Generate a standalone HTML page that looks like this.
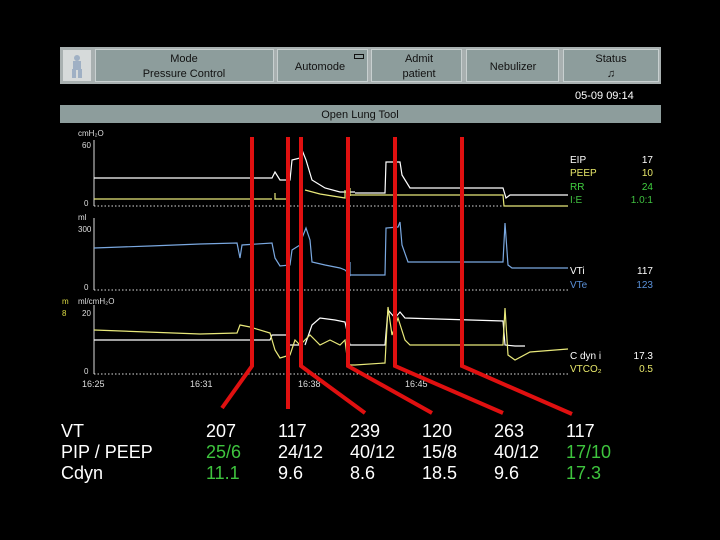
<!DOCTYPE html>
<html><head><meta charset="utf-8"><style>
html,body{margin:0;padding:0;background:#000;width:720px;height:540px;overflow:hidden}
svg{position:absolute;left:0;top:0}
.t{font-family:"Liberation Sans",sans-serif}
</style></head><body>
<svg width="720" height="540" viewBox="0 0 720 540" xmlns="http://www.w3.org/2000/svg">
<!-- top bar -->
<rect x="60" y="47" width="601" height="37" fill="#a8b0b0"/>
<rect x="63" y="50" width="28" height="31" fill="#d6dada"/>
<g fill="#9fb0c4"><circle cx="77" cy="58" r="3"/><rect x="73" y="61" width="8" height="9"/><rect x="72" y="69" width="4" height="9"/><rect x="78" y="69" width="4" height="9"/></g>
<g fill="#8d9d9c" stroke="#c8d0d0" stroke-width="1">
<rect x="95.5" y="49.5" width="178" height="32"/>
<rect x="277.5" y="49.5" width="90" height="32"/>
<rect x="371.5" y="49.5" width="90" height="32"/>
<rect x="466.5" y="49.5" width="92" height="32"/>
<rect x="563.5" y="49.5" width="95" height="32"/>
</g>
<g class="t" font-size="11" fill="#111" text-anchor="middle">
<text x="184" y="62">Mode</text><text x="184" y="77">Pressure Control</text>
<text x="320" y="70">Automode</text>
<text x="419" y="62">Admit</text><text x="419" y="77">patient</text>
<text x="513" y="70">Nebulizer</text>
<text x="611" y="62">Status</text><text x="611" y="77">♫</text>
</g>
<rect x="354.5" y="54.5" width="9" height="4" fill="none" stroke="#111"/>
<text class="t" x="575" y="99" font-size="11" fill="#fff">05-09  09:14</text>
<rect x="60" y="105" width="601" height="18" fill="#8d9d9c"/>
<text class="t" x="360" y="118" font-size="11" fill="#111" text-anchor="middle">Open Lung Tool</text>

<!-- axes -->
<g stroke="#ddd" stroke-width="1" fill="none">
<path d="M94 140V206M94 218V290M94 305V374"/>
<path d="M94 206H570M94 290H570M94 374H570" stroke-dasharray="1.5 2"/>
</g>
<g class="t" font-size="8" fill="#ddd">
<text x="78" y="136">cmH₂O</text><text x="82" y="148">60</text><text x="84" y="206">0</text>
<text x="78" y="220">ml</text><text x="78" y="232">300</text><text x="84" y="290">0</text>
<text x="78" y="304">ml/cmH₂O</text><text x="82" y="316">20</text><text x="84" y="374">0</text>
<text x="62" y="304" fill="#dd4">m</text><text x="62" y="316" fill="#dd4">8</text>
</g>
<!-- traces -->
<g fill="none" stroke-width="1.2">
<path stroke="#fff" d="M94 178H272L275 172L280 180H290L292 160L300 158L302 150L306 160L312 180L325 188L340 192H355M355 193H385L386 162H400L402 175L410 188H503L506 198L510 195H568"/>
<path stroke="#e8e87a" d="M94 199H272M275 193V199H290M305 190L320 194L345 198V190M350 196V188M350 195H503L504 206H568"/>
<path stroke="#7aa8e0" d="M94 248L150 246L200 244L237 243L240 258L242 245L272 243L275 258L280 266L290 265L292 250L300 245L302 238L306 228L310 240L312 262L325 265L340 268L345 270L350 275V262M350 275H385L386 228L398 227L400 222L402 245L408 262H503L505 223L508 265L512 268H568"/>
<path stroke="#fff" d="M94 340H270L272 335H290M290 345H300M305 345L312 325L320 318L335 320L345 322L350 345H385L388 310L395 318L400 312L405 318L503 321L505 345L515 346H525"/>
<path stroke="#e8e87a" d="M94 330L200 334L237 333L240 325L250 327L270 333L275 350L280 358L290 355L295 340L300 345L310 335L320 345L330 340L340 345L345 340L348 365L355 365L385 363L388 307L392 335L398 318L405 340L410 345H503L505 308L508 355L515 360L530 352L568 349"/>
</g>
<!-- right labels -->
<g class="t" font-size="10">
<text x="570" y="163" fill="#fff">EIP</text><text x="653" y="163" fill="#fff" text-anchor="end">17</text>
<text x="570" y="176" fill="#e8e86a">PEEP</text><text x="653" y="176" fill="#e8e86a" text-anchor="end">10</text>
<text x="570" y="190" fill="#40d040">RR</text><text x="653" y="190" fill="#40d040" text-anchor="end">24</text>
<text x="570" y="203" fill="#40c040">I:E</text><text x="653" y="203" fill="#40c040" text-anchor="end">1.0:1</text>
<text x="570" y="274" fill="#fff">VTi</text><text x="653" y="274" fill="#fff" text-anchor="end">117</text>
<text x="570" y="288" fill="#5a90d8">VTe</text><text x="653" y="288" fill="#5a90d8" text-anchor="end">123</text>
<text x="570" y="359" fill="#fff">C dyn i</text><text x="653" y="359" fill="#fff" text-anchor="end">17.3</text>
<text x="570" y="372" fill="#e8e86a">VTCO₂</text><text x="653" y="372" fill="#e8e86a" text-anchor="end">0.5</text>
<text x="82" y="387" fill="#ddd" font-size="9">16:25</text>
<text x="190" y="387" fill="#ddd" font-size="9">16:31</text>
<text x="298" y="387" fill="#ddd" font-size="9">16:38</text>
<text x="405" y="387" fill="#ddd" font-size="9">16:45</text>
</g>
<!-- red lines -->
<g stroke="#e01010" stroke-width="4" fill="none">
<path d="M252 137V366L222 408"/>
<path d="M288 137V409"/>
<path d="M301 137V366L365 413"/>
<path d="M348 137V366L432 413"/>
<path d="M395 137V366L503 413"/>
<path d="M462 137V366L572 414"/>
</g>
<!-- table -->
<g class="t" font-size="18" fill="#fff">
<text x="61" y="437">VT</text><text x="61" y="458">PIP / PEEP</text><text x="61" y="479">Cdyn</text>
<text x="206" y="437">207</text><text x="206" y="458" fill="#3ec43e">25/6</text><text x="206" y="479" fill="#3ec43e">11.1</text>
<text x="278" y="437">117</text><text x="278" y="458">24/12</text><text x="278" y="479">9.6</text>
<text x="350" y="437">239</text><text x="350" y="458">40/12</text><text x="350" y="479">8.6</text>
<text x="422" y="437">120</text><text x="422" y="458">15/8</text><text x="422" y="479">18.5</text>
<text x="494" y="437">263</text><text x="494" y="458">40/12</text><text x="494" y="479">9.6</text>
<text x="566" y="437">117</text><text x="566" y="458" fill="#3ec43e">17/10</text><text x="566" y="479" fill="#3ec43e">17.3</text>
</g>
</svg>
</body></html>
